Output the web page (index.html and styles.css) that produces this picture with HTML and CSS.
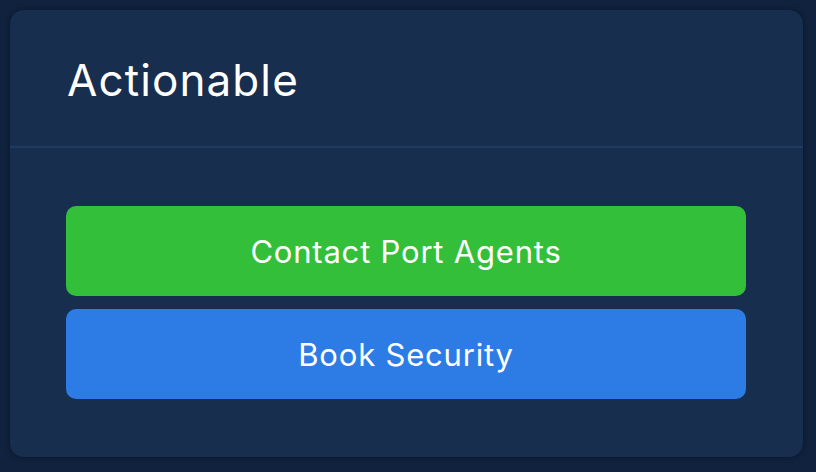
FILE: index.html
```html
<!DOCTYPE html>
<html>
<head>
<meta charset="utf-8">
<link rel="stylesheet" href="styles.css">
</head>
<body>
<div class="card">
  <div class="card-header">
    <h1 class="title">Actionable</h1>
  </div>
  <div class="card-body">
    <button class="btn btn-green">Contact Port Agents</button>
    <button class="btn btn-blue">Book Security</button>
  </div>
</div>
</body>
</html>
```
FILE: styles.css
```css
html, body {
  margin: 0;
  padding: 0;
  background: #10223d;
}
body {
  padding: 10px 13px 15px 10px;
  font-family: "Inter", "Noto Sans", sans-serif;
  color: #ffffff;
}
.card {
  width: 793px;
  height: 447px;
  background: #172e4f;
  border-radius: 14px;
  box-shadow: 0 0 5px rgba(5, 15, 30, 0.6);
  box-sizing: border-box;
  display: flex;
  flex-direction: column;
}
.card-header {
  height: 138px;
  border-bottom: 2px solid #1e3c61;
  box-sizing: border-box;
  padding-left: 57px;
  display: flex;
  align-items: flex-start;
}
.title {
  margin: 0;
  margin-top: 43px;
  font-size: 44px;
  font-weight: 400;
  line-height: 54px;
  letter-spacing: 1.1px;
}
.card-body {
  padding: 58px 57px 0 56px;
  display: flex;
  flex-direction: column;
  gap: 13px;
}
.btn {
  height: 90px;
  border: none;
  border-radius: 10px;
  color: #ffffff;
  font-family: "Inter", "Noto Sans", sans-serif;
  font-size: 31px;
  font-weight: 400;
  letter-spacing: 0.8px;
  padding: 0;
  display: flex;
  align-items: center;
  justify-content: center;
}
.btn-green {
  background: #34bf3a;
}
.btn-blue {
  background: #2d7be5;
}
```
